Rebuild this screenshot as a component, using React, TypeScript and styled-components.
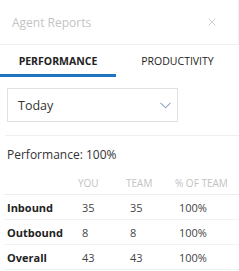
import React from "react";
import styled, { createGlobalStyle } from "styled-components";

const Global = createGlobalStyle`
  html, body { margin: 0; padding: 0; background: #fff; }
  body { font-family: "Open Sans", "Liberation Sans", sans-serif; color: #333; }
`;

const Panel = styled.div`
  width: 239px;
  height: 271px;
  overflow: hidden;
  background: #fff;
`;

const Header = styled.div`
  height: 45px;
  box-sizing: border-box;
  display: flex;
  align-items: center;
  justify-content: space-between;
  padding: 0 22px 0 12px;
  border-bottom: 1px solid #f0f0f0;
  border-right: 1px solid #f3f3f3;
`;

const Title = styled.span`
  font-size: 12px;
  color: #c4c4c4;
`;

const Close = styled.svg`
  width: 8px;
  height: 8px;
`;

const Tabs = styled.div`
  display: flex;
  height: 32px;
`;

const Tab = styled.div<{ $active?: boolean; $w?: string }>`
  ${(p) => (p.$w ? `width: ${p.$w};` : "flex: 1;")}
  box-sizing: border-box;
  display: flex;
  align-items: center;
  justify-content: center;
  font-size: 10.5px;
  font-weight: ${(p) => (p.$active ? 700 : 400)};
  color: #222;
  border-bottom: 3px solid ${(p) => (p.$active ? "#1f74c4" : "transparent")};
  padding-top: 2px;
`;

const Body = styled.div`
  padding: 11px 0 0 7px;
`;

const Select = styled.div`
  width: 171px;
  height: 34px;
  box-sizing: border-box;
  border: 1px solid #e2e2e2;
  display: flex;
  align-items: center;
  justify-content: space-between;
  padding: 0 6px 0 10px;
  font-size: 12.5px;
  color: #333;
`;

const Divider = styled.div`
  height: 1px;
  background: #efefef;
  margin: 13px 0 0 -2px;
`;

const Perf = styled.div`
  font-size: 12px;
  color: #333;
  margin-top: 10px;
  line-height: 18px;
`;

const Table = styled.div`
  margin: 8px 0 0 -3px;
`;

const Row = styled.div<{ $head?: boolean }>`
  display: grid;
  grid-template-columns: 71px 48px 49px 1fr;
  align-items: center;
  height: ${(p) => (p.$head ? "22px" : "24px")};
  border-bottom: 1px solid ${(p) => (p.$head ? "#ececec" : "#f2f2f2")};
  padding-left: 3px;
`;

const HeadCell = styled.span`
  font-size: 10px;
  color: #c2c2c2;
  text-transform: uppercase;
`;

const Label = styled.span`
  font-size: 11px;
  font-weight: 700;
  color: #222;
`;

const Cell = styled.span`
  font-size: 11px;
  color: #444;
  padding-left: 4px;
`;

const rows = [
  { label: "Inbound", you: "35", team: "35", pct: "100%" },
  { label: "Outbound", you: "8", team: "8", pct: "100%" },
  { label: "Overall", you: "43", team: "43", pct: "100%" },
];

export default function App() {
  return (
    <>
      <Global />
      <Panel>
        <Header>
          <Title>Agent Reports</Title>
          <Close viewBox="0 0 8 8">
            <path d="M0.5 0.5 L7.5 7.5 M7.5 0.5 L0.5 7.5" stroke="#d0d0d0" strokeWidth="1" />
          </Close>
        </Header>
        <Tabs>
          <Tab $active $w="116px">PERFORMANCE</Tab>
          <Tab>PRODUCTIVITY</Tab>
        </Tabs>
        <Body>
          <Select>
            <span>Today</span>
            <svg width="11" height="7" viewBox="0 0 11 7">
              <path d="M0.5 0.8 L5.5 5.8 L10.5 0.8" fill="none" stroke="#8ea8c3" strokeWidth="1.1" />
            </svg>
          </Select>
          <Divider />
          <Perf>Performance: 100%</Perf>
          <Table>
            <Row $head>
              <span />
              <HeadCell>You</HeadCell>
              <HeadCell>Team</HeadCell>
              <HeadCell>% of Team</HeadCell>
            </Row>
            {rows.map((r) => (
              <Row key={r.label}>
                <Label>{r.label}</Label>
                <Cell>{r.you}</Cell>
                <Cell>{r.team}</Cell>
                <Cell>{r.pct}</Cell>
              </Row>
            ))}
          </Table>
        </Body>
      </Panel>
    </>
  );
}
